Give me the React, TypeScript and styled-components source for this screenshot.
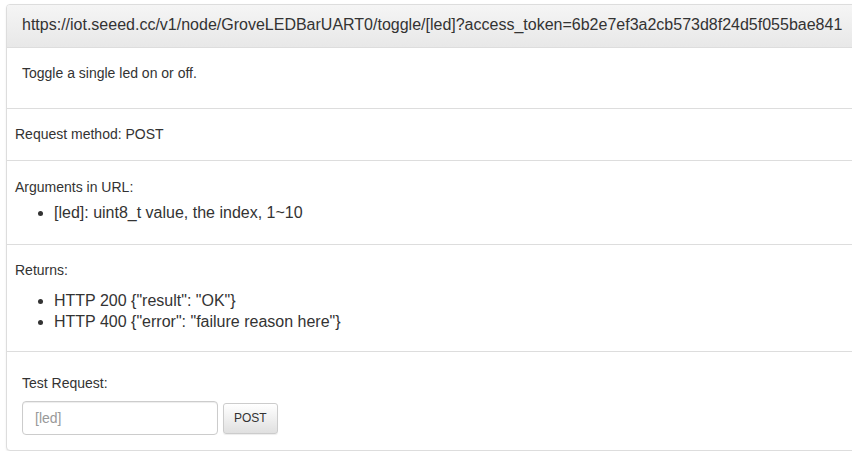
import React from "react";
import styled, { createGlobalStyle } from "styled-components";

const Global = createGlobalStyle`
  html, body { margin: 0; padding: 0; background: #fff; overflow: hidden; }
  body { font-family: "Liberation Sans", Arial, sans-serif; color: #333; }
  * { box-sizing: border-box; }
`;

const Page = styled.div`
  padding: 4px 0 0 6px;
`;

const Panel = styled.div`
  margin-right: -4px;
  border: 1px solid #ddd;
  border-radius: 4px;
  background: #fff;
  box-shadow: 0 1px 2px rgba(0, 0, 0, 0.08);
  overflow: hidden;
`;

const Heading = styled.div`
  background: linear-gradient(to bottom, #f5f5f5 0%, #e8e8e8 100%);
  border-bottom: 1px solid #ddd;
  padding: 10px 15px 12px 15px;
  font-size: 16px;
  line-height: 20px;
  color: #333;
  white-space: nowrap;
`;

const Row = styled.div<{ $pt: number; $pb: number; $px: number }>`
  padding: ${(p) => p.$pt}px ${(p) => p.$px}px ${(p) => p.$pb}px;
  border-bottom: 1px solid #ddd;
  &:last-child { border-bottom: none; }
`;

const Small = styled.div`
  font-size: 14px;
  line-height: 20px;
  color: #333;
`;

const List = styled.ul<{ $mt: number }>`
  margin: ${(p) => p.$mt}px 0 0 0;
  padding: 0 0 0 39px;
  font-size: 16px;
  line-height: 21px;
  color: #333;
`;

const Form = styled.div`
  display: flex;
  align-items: center;
  gap: 5px;
  margin-top: 8px;
`;

const Input = styled.input`
  width: 196px;
  height: 34px;
  border: 1px solid #ccc;
  border-radius: 4px;
  padding: 6px 12px;
  font-family: "Liberation Sans", Arial, sans-serif;
  font-size: 14px;
  color: #555;
  box-shadow: inset 0 1px 1px rgba(0, 0, 0, 0.075);
  &::placeholder { color: #999; }
`;

const Button = styled.button`
  height: 31px;
  padding: 0 10px;
  border: 1px solid #ccc;
  border-radius: 3px;
  background: linear-gradient(to bottom, #fff 0%, #e0e0e0 100%);
  font-family: "Liberation Sans", Arial, sans-serif;
  font-size: 12px;
  color: #333;
  box-shadow: inset 0 1px 0 rgba(255, 255, 255, 0.15), 0 1px 1px rgba(0, 0, 0, 0.075);
`;

export default function App() {
  return (
    <Page>
      <Global />
      <Panel>
        <Heading>
          https://iot.seeed.cc/v1/node/GroveLEDBarUART0/toggle/[led]?access_token=6b2e7ef3a2cb573d8f24d5f055bae841
        </Heading>
        <Row $pt={15} $pb={25} $px={15}>
          <Small>Toggle a single led on or off.</Small>
        </Row>
        <Row $pt={15} $pb={16} $px={8}>
          <Small>Request method: POST</Small>
        </Row>
        <Row $pt={16} $pb={21} $px={8}>
          <Small>Arguments in URL:</Small>
          <List $mt={5}>
            <li>[led]: uint8_t value, the index, 1~10</li>
          </List>
        </Row>
        <Row $pt={15} $pb={19} $px={8}>
          <Small>Returns:</Small>
          <List $mt={10}>
            <li>HTTP 200 {'{"result": "OK"}'}</li>
            <li>HTTP 400 {'{"error": "failure reason here"}'}</li>
          </List>
        </Row>
        <Row $pt={21} $pb={15} $px={15}>
          <Small>Test Request:</Small>
          <Form>
            <Input placeholder="[led]" />
            <Button>POST</Button>
          </Form>
        </Row>
      </Panel>
    </Page>
  );
}
